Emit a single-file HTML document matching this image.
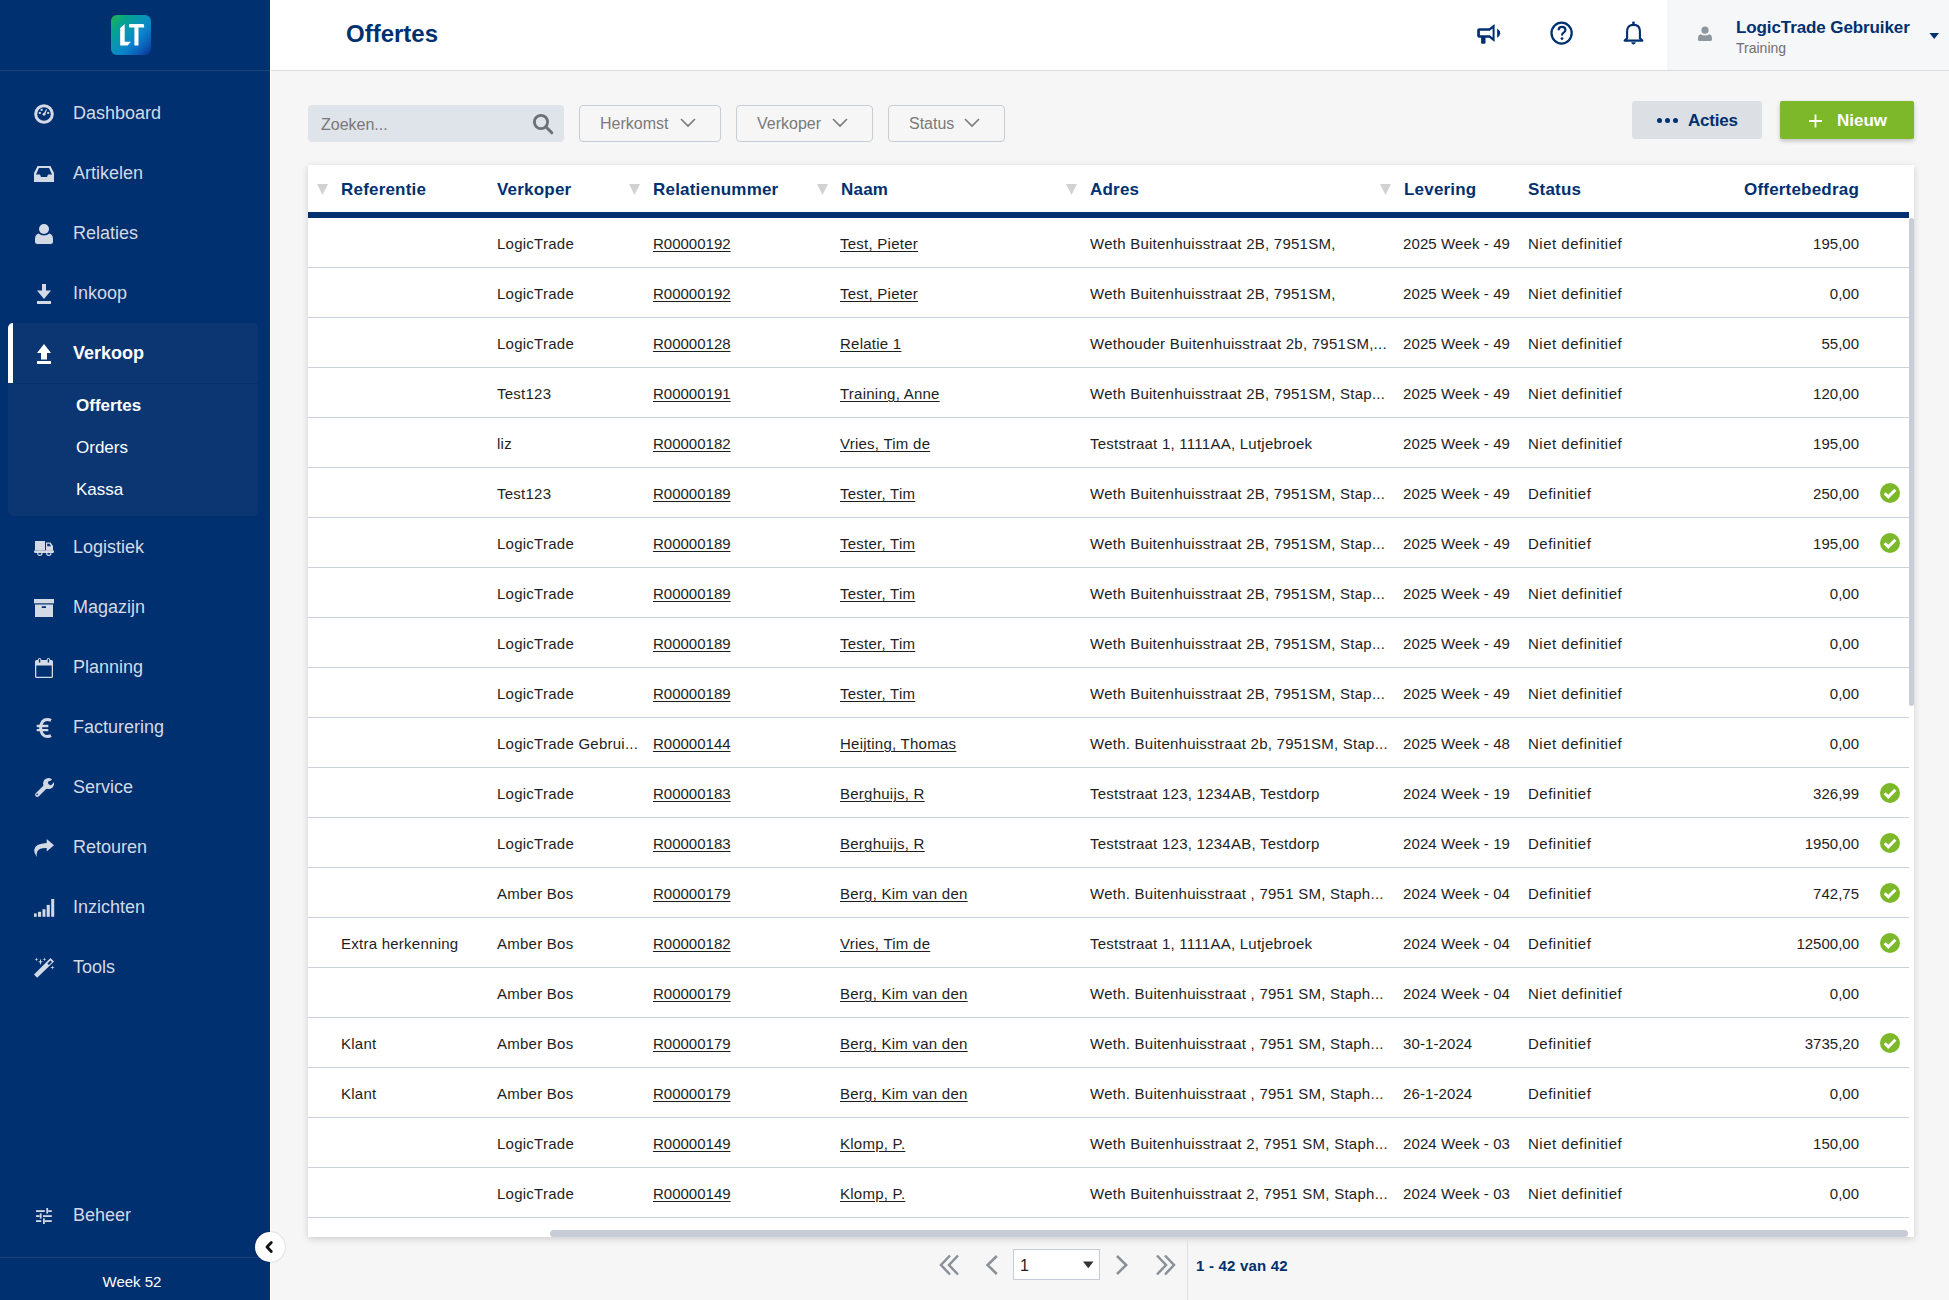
<!DOCTYPE html>
<html><head><meta charset="utf-8"><title>Offertes</title>
<style>
html,body{margin:0;padding:0;}
body{width:1949px;height:1300px;overflow:hidden;position:relative;background:#f6f6f6;font-family:"Liberation Sans",sans-serif;}
.t{position:absolute;white-space:nowrap;}
.u{text-decoration:underline;text-underline-offset:2px;text-decoration-thickness:1px;}
</style></head><body>

<div style="position:absolute;left:0px;top:0px;width:270px;height:1300px;background:#00306f;"></div>
<div style="position:absolute;left:270px;top:0px;width:1px;height:1300px;background:#ffffff;"></div>
<div style="position:absolute;left:111px;top:15px;width:40px;height:40px;border-radius:6px;background:linear-gradient(135deg,#27b14f 0%,#05a58a 22%,#0a93b8 45%,#0b83cc 62%,#0a60b8 80%,#0b2f8f 100%);"></div>
<svg style="position:absolute;left:111px;top:15px" width="40" height="40" viewBox="0 0 40 40"><path fill="#fff" d="M9.2 13.1 L13.7 9.1 L13.7 26.7 L19.9 26.7 L16.6 30.4 L9.2 30.4 Z"/><path fill="#fff" d="M18 9.1 H31.8 Q33.1 9.1 33.1 10.4 V12.6 H27.5 V30.4 H23.4 V12.6 H18.6 L18 12 Z"/></svg>
<div style="position:absolute;left:0px;top:70px;width:270px;height:1px;background:#1a4178;"></div>
<div class="t " style="left:73px;top:104.00px;font-size:18px;line-height:18px;color:#d3dae6;font-weight:400;">Dashboard</div>
<div class="t " style="left:73px;top:164.00px;font-size:18px;line-height:18px;color:#d3dae6;font-weight:400;">Artikelen</div>
<div class="t " style="left:73px;top:224.00px;font-size:18px;line-height:18px;color:#d3dae6;font-weight:400;">Relaties</div>
<div class="t " style="left:73px;top:284.00px;font-size:18px;line-height:18px;color:#d3dae6;font-weight:400;">Inkoop</div>
<div style="position:absolute;left:8px;top:323px;width:250px;height:193px;border-radius:5px;background:#0b3672;"></div>
<div style="position:absolute;left:8px;top:323px;width:5px;height:60px;border-radius:5px 0 0 0;background:#ffffff;"></div>
<div style="position:absolute;left:13px;top:383px;width:245px;height:1px;background:#083068;"></div>
<div class="t " style="left:73px;top:344.00px;font-size:18px;line-height:18px;color:#ffffff;font-weight:700;">Verkoop</div>
<div class="t " style="left:76px;top:397.00px;font-size:17px;line-height:17px;color:#ffffff;font-weight:700;">Offertes</div>
<div class="t " style="left:76px;top:439.00px;font-size:17px;line-height:17px;color:#ffffff;font-weight:400;">Orders</div>
<div class="t " style="left:76px;top:481.00px;font-size:17px;line-height:17px;color:#ffffff;font-weight:400;">Kassa</div>
<div class="t " style="left:73px;top:538.00px;font-size:18px;line-height:18px;color:#d3dae6;font-weight:400;">Logistiek</div>
<div class="t " style="left:73px;top:598.00px;font-size:18px;line-height:18px;color:#d3dae6;font-weight:400;">Magazijn</div>
<div class="t " style="left:73px;top:658.00px;font-size:18px;line-height:18px;color:#d3dae6;font-weight:400;">Planning</div>
<div class="t " style="left:73px;top:718.00px;font-size:18px;line-height:18px;color:#d3dae6;font-weight:400;">Facturering</div>
<div class="t " style="left:73px;top:778.00px;font-size:18px;line-height:18px;color:#d3dae6;font-weight:400;">Service</div>
<div class="t " style="left:73px;top:838.00px;font-size:18px;line-height:18px;color:#d3dae6;font-weight:400;">Retouren</div>
<div class="t " style="left:73px;top:898.00px;font-size:18px;line-height:18px;color:#d3dae6;font-weight:400;">Inzichten</div>
<div class="t " style="left:73px;top:958.00px;font-size:18px;line-height:18px;color:#d3dae6;font-weight:400;">Tools</div>
<div class="t " style="left:73px;top:1206.00px;font-size:18px;line-height:18px;color:#d3dae6;font-weight:400;">Beheer</div>
<div style="position:absolute;left:0px;top:1257px;width:270px;height:1px;background:#1a4178;"></div>
<div class="t " style="left:-168px;width:600px;text-align:center;top:1274.00px;font-size:15px;line-height:15px;color:#ffffff;font-weight:400;">Week 52</div>
<svg style="position:absolute;left:34px;top:104px" width="20" height="20" viewBox="0 0 20 20"><circle cx="10" cy="10" r="8.3" fill="none" stroke="#d3dae6" stroke-width="3"/><rect x="4.8" y="7.9" width="2" height="2" fill="#d3dae6"/><rect x="13.2" y="7.9" width="2" height="2" fill="#d3dae6"/><rect x="6.6" y="4.8" width="2" height="2" fill="#d3dae6"/><path d="M9 10.5 L12.3 5 L13 5.4 L11 11 Z" fill="#d3dae6"/><circle cx="10" cy="10.3" r="1.4" fill="#d3dae6"/></svg>
<svg style="position:absolute;left:34px;top:166px" width="20" height="16" viewBox="0 0 20 16"><path fill="#d3dae6" fill-rule="evenodd" d="M3.5 0 H16.5 L20 7 V16 H0 V7 Z M5 2 L2 8.5 H6 L7 11 H13 L14 8.5 H18 L15 2 Z"/></svg>
<svg style="position:absolute;left:34px;top:224px" width="20" height="20" viewBox="0 0 20 20"><circle cx="10" cy="5" r="5" fill="#d3dae6"/><path fill="#d3dae6" d="M4.5 9.5 Q7 11.5 10 11.5 Q13 11.5 15.5 9.5 Q19 10.5 19 15 V17.5 Q19 20 16.5 20 H3.5 Q1 20 1 17.5 V15 Q1 10.5 4.5 9.5 Z"/></svg>
<svg style="position:absolute;left:37px;top:284px" width="14" height="20" viewBox="0 0 14 20"><path fill="#d3dae6" d="M5 0 H9 V6.5 H14 L7 15 L0 6.5 H5 Z"/><rect x="0" y="17" width="14" height="3" fill="#d3dae6"/></svg>
<svg style="position:absolute;left:37px;top:344px" width="14" height="20" viewBox="0 0 14 20"><path fill="#fff" d="M7 0 L14 9 H10 V15.5 H4 V9 H0 Z"/><rect x="0" y="17" width="14" height="3" fill="#fff"/></svg>
<svg style="position:absolute;left:34px;top:541px" width="20" height="15" viewBox="0 0 20 15"><rect x="1" y="0" width="10" height="9" fill="#d3dae6"/><path fill="#d3dae6" fill-rule="evenodd" d="M12 1.5 H16.5 L19 5 V9.5 H12 Z M13.2 2.8 V5.2 H17 L15.6 2.8 Z"/><rect x="0" y="9.3" width="20" height="2.6" rx="1.2" fill="#d3dae6"/><circle cx="5.8" cy="12.3" r="2.1" fill="none" stroke="#d3dae6" stroke-width="1.2"/><circle cx="14.8" cy="12.3" r="2.1" fill="none" stroke="#d3dae6" stroke-width="1.2"/></svg>
<svg style="position:absolute;left:34px;top:599px" width="20" height="18" viewBox="0 0 20 18"><rect x="0" y="0" width="20" height="4.3" fill="#d3dae6"/><path fill="#d3dae6" fill-rule="evenodd" d="M1 5.5 H19 V18 H1 Z M7.8 7.3 V9 H12 V7.3 Z"/></svg>
<svg style="position:absolute;left:35px;top:658px" width="18" height="20" viewBox="0 0 18 20"><path fill="#d3dae6" fill-rule="evenodd" d="M1.5 2 H16.5 Q18 2 18 3.5 V18.5 Q18 20 16.5 20 H1.5 Q0 20 0 18.5 V3.5 Q0 2 1.5 2 Z M1.3 7.4 V18.7 H16.7 V7.4 Z"/><rect x="2.9" y="0" width="3.4" height="5.4" rx="1.7" fill="#d3dae6"/><rect x="11.7" y="0" width="3.4" height="5.4" rx="1.7" fill="#d3dae6"/><rect x="3.9" y="1" width="1.4" height="3.6" rx="0.7" fill="#00306f"/><rect x="12.7" y="1" width="1.4" height="3.6" rx="0.7" fill="#00306f"/></svg>
<svg style="position:absolute;left:36px;top:718px" width="16" height="20" viewBox="0 0 16 20"><path fill="none" stroke="#d3dae6" stroke-width="3" d="M15 2.4 Q13.2 1.5 11.2 1.5 Q5.2 1.5 4.6 10 Q5.2 18.5 11.2 18.5 Q13.2 18.5 15 17.6"/><rect x="0.7" y="6.8" width="11.6" height="2.4" fill="#d3dae6"/><rect x="0.7" y="11" width="11.6" height="2.2" fill="#d3dae6"/></svg>
<svg style="position:absolute;left:34px;top:778px" width="20" height="20" viewBox="0 0 20 20"><circle cx="14.6" cy="5.5" r="5.5" fill="#d3dae6"/><path d="M12.6 7.5 L3.3 16.7" stroke="#d3dae6" stroke-width="4.4" stroke-linecap="round"/><path fill="#00306f" d="M14.4 5 L18.8 0.6 L21.2 3 L16.8 7.4 Z"/><circle cx="16" cy="4.7" r="2" fill="#00306f"/><circle cx="3.2" cy="16.4" r="0.8" fill="#00306f"/></svg>
<svg style="position:absolute;left:34px;top:839px" width="20" height="18" viewBox="0 0 20 18"><path fill="#d3dae6" d="M12.7 0 L20 6.3 L12.7 12.6 V9 Q5.5 8.8 3.4 12.2 Q2.4 14 2.8 18 Q0 14.2 0.2 11 Q0.8 4.5 12.7 4 Z"/></svg>
<svg style="position:absolute;left:34px;top:899px" width="21" height="18" viewBox="0 0 21 18"><rect x="0" y="14.4" width="2.7" height="3.4" fill="#d3dae6"/><rect x="4" y="12.8" width="3.1" height="5" fill="#d3dae6"/><rect x="8.5" y="10.2" width="2.9" height="7.6" fill="#d3dae6"/><rect x="12.7" y="5.9" width="3.1" height="11.9" fill="#d3dae6"/><rect x="17.2" y="0" width="3" height="17.8" fill="#d3dae6"/></svg>
<svg style="position:absolute;left:34px;top:956px" width="21" height="22" viewBox="0 0 21 22"><path fill="#d3dae6" fill-rule="evenodd" d="M-0.1 18.5 L16.5 2.1 L20 5.4 L3.15 21.85 Z M13.4 7.5 L16.5 4.4 L18 5.9 L14.9 8.9 Z"/><path fill="#d3dae6" d="M2.5 1.1999999999999997 L2.95 2.9499999999999997 L4.7 3.4 L2.95 3.85 L2.5 5.6 L2.05 3.85 L0.2999999999999998 3.4 L2.05 2.9499999999999997 Z M6.5 2.4 L7.15 5.1499999999999995 L8.9 5.8 L7.15 6.45 L6.5 9.2 L5.85 6.45 L4.1 5.8 L5.85 5.1499999999999995 Z M10.4 1.1999999999999997 L10.85 2.9499999999999997 L12.600000000000001 3.4 L10.85 3.85 L10.4 5.6 L9.950000000000001 3.85 L8.2 3.4 L9.950000000000001 2.9499999999999997 Z M18.5 9.2 L18.95 11.05 L20.8 11.5 L18.95 11.95 L18.5 13.8 L18.05 11.95 L16.2 11.5 L18.05 11.05 Z"/></svg>
<svg style="position:absolute;left:36px;top:1208px" width="16" height="16" viewBox="0 0 16 16"><g fill="#d3dae6"><rect x="0" y="2.2" width="8.8" height="1.8"/><rect x="12.2" y="2.2" width="3.6" height="1.8"/><rect x="10.3" y="0" width="1.8" height="5.6"/><rect x="0" y="7.2" width="3.6" height="1.8"/><rect x="7" y="7.2" width="8.8" height="1.8"/><rect x="3.8" y="5.4" width="1.8" height="5.2"/><rect x="0" y="12.2" width="5.3" height="1.8"/><rect x="8.6" y="12.2" width="7.2" height="1.8"/><rect x="7" y="10.4" width="1.8" height="5.6"/></g></svg>
<div style="position:absolute;left:255px;top:1232px;width:30px;height:30px;border-radius:50%;background:#fff;box-shadow:0 0 2px rgba(0,0,0,0.25);"></div>
<svg style="position:absolute;left:263px;top:1240px" width="12" height="14" viewBox="0 0 12 14"><path d="M8.3 2.6 L4 7 L8.3 11.4" fill="none" stroke="#111" stroke-width="2.8" stroke-linecap="round" stroke-linejoin="round"/></svg>
<div style="position:absolute;left:271px;top:0px;width:1678px;height:70px;background:#ffffff;"></div>
<div style="position:absolute;left:1667px;top:0px;width:282px;height:70px;background:#f6f7f9;"></div>
<div style="position:absolute;left:271px;top:70px;width:1678px;height:1px;background:#dcdcdc;"></div>
<div class="t " style="left:346px;top:21.50px;font-size:24px;line-height:24px;color:#00306f;font-weight:700;">Offertes</div>
<svg style="position:absolute;left:1476px;top:23px" width="26" height="22" viewBox="0 0 26 22"><path fill="#00306f" fill-rule="evenodd" d="M3.2 5.3 H13.2 L18.6 0.9 V19 L13.2 14.7 H9.5 V19.7 Q9.5 20.7 8.5 20.7 H6.1 Q5.1 20.7 5.1 19.7 V14.7 H3.2 Q1.2 14.7 1.2 12.7 V7.3 Q1.2 5.3 3.2 5.3 Z M3.9 7.8 V12.2 H13.8 L16.6 14.4 V5.6 L13.8 7.8 Z"/><path fill="#00306f" d="M21.1 5.6 Q24.2 7.5 24.2 10.15 Q24.2 12.8 21.1 14.7 Z"/></svg>
<svg style="position:absolute;left:1549px;top:20px" width="26" height="26" viewBox="0 0 26 26"><ellipse cx="12.6" cy="13.1" rx="10.1" ry="10.5" fill="none" stroke="#00306f" stroke-width="2.3"/><path d="M9.6 10.2 Q9.6 6.8 13 6.8 Q16.4 6.8 16.4 9.9 Q16.4 11.6 14.6 12.6 Q13 13.5 13 15.4" fill="none" stroke="#00306f" stroke-width="2.2"/><circle cx="13" cy="18.6" r="1.4" fill="#00306f"/></svg>
<svg style="position:absolute;left:1622px;top:20px" width="24" height="26" viewBox="0 0 24 26"><path fill="none" stroke="#00306f" stroke-width="2.1" stroke-linejoin="round" d="M5.1 18.2 V11.3 Q5.1 4.9 11.5 4.9 Q17.9 4.9 17.9 11.3 V18.2 L20.4 20.6 H2.6 Z"/><rect x="10.3" y="1.5" width="2.4" height="3.4" rx="0.8" fill="#00306f"/><path d="M9.2 22.3 H13.8 Q13.4 24.6 11.5 24.6 Q9.6 24.6 9.2 22.3 Z" fill="#00306f"/></svg>
<svg style="position:absolute;left:1697px;top:26px" width="16" height="16" viewBox="0 0 16 16"><circle cx="8" cy="4.2" r="3.6" fill="#8f969e"/><path fill="#8f969e" d="M3.5 8.3 Q5.5 9.6 8 9.6 Q10.5 9.6 12.5 8.3 Q15 9 15 12 V13.4 Q15 15 13.4 15 H2.6 Q1 15 1 13.4 V12 Q1 9 3.5 8.3 Z"/></svg>
<div class="t " style="left:1736px;top:19.00px;font-size:17px;line-height:17px;color:#00306f;font-weight:700;letter-spacing:-0.1px;">LogicTrade Gebruiker</div>
<div class="t " style="left:1736px;top:41.00px;font-size:14px;line-height:14px;color:#6f6f6f;font-weight:400;">Training</div>
<svg style="position:absolute;left:1929px;top:32px" width="11" height="8" viewBox="0 0 11 8"><path d="M0.5 1 H10 L5.25 7 Z" fill="#00306f"/></svg>
<div style="position:absolute;left:308px;top:105px;width:256px;height:37px;border-radius:4px;background:#dfe3ea;"></div>
<div class="t " style="left:321px;top:116.50px;font-size:16px;line-height:16px;color:#787878;font-weight:400;">Zoeken...</div>
<svg style="position:absolute;left:532px;top:113px" width="22" height="22" viewBox="0 0 22 22"><circle cx="9" cy="9" r="6.6" fill="none" stroke="#6d7074" stroke-width="2.8"/><path d="M13.8 13.8 L19.8 19.8" stroke="#6d7074" stroke-width="3" stroke-linecap="round"/></svg>
<div style="position:absolute;left:579px;top:105px;width:140px;height:35px;border:1px solid #c7cdd7;border-radius:4px;"></div>
<div class="t " style="left:600px;top:116.00px;font-size:16px;line-height:16px;color:#7a7a7a;font-weight:400;">Herkomst</div>
<svg style="position:absolute;left:680px;top:117px" width="16" height="12" viewBox="0 0 16 12"><path d="M1 2 L8 9 L15 2" fill="none" stroke="#7a7a7a" stroke-width="1.6"/></svg>
<div style="position:absolute;left:736px;top:105px;width:135px;height:35px;border:1px solid #c7cdd7;border-radius:4px;"></div>
<div class="t " style="left:757px;top:116.00px;font-size:16px;line-height:16px;color:#7a7a7a;font-weight:400;">Verkoper</div>
<svg style="position:absolute;left:832px;top:117px" width="16" height="12" viewBox="0 0 16 12"><path d="M1 2 L8 9 L15 2" fill="none" stroke="#7a7a7a" stroke-width="1.6"/></svg>
<div style="position:absolute;left:888px;top:105px;width:115px;height:35px;border:1px solid #c7cdd7;border-radius:4px;"></div>
<div class="t " style="left:909px;top:116.00px;font-size:16px;line-height:16px;color:#7a7a7a;font-weight:400;">Status</div>
<svg style="position:absolute;left:964px;top:117px" width="16" height="12" viewBox="0 0 16 12"><path d="M1 2 L8 9 L15 2" fill="none" stroke="#7a7a7a" stroke-width="1.6"/></svg>
<div style="position:absolute;left:1632px;top:101px;width:130px;height:37.5px;border-radius:3px;background:#dcdfe4;"></div>
<div style="position:absolute;left:1657.0px;top:117.5px;width:5px;height:5px;border-radius:50%;background:#00306f;"></div>
<div style="position:absolute;left:1665.0px;top:117.5px;width:5px;height:5px;border-radius:50%;background:#00306f;"></div>
<div style="position:absolute;left:1673.0px;top:117.5px;width:5px;height:5px;border-radius:50%;background:#00306f;"></div>
<div class="t " style="left:1688px;top:112.00px;font-size:17px;line-height:17px;color:#00306f;font-weight:700;letter-spacing:-0.2px;">Acties</div>
<div style="position:absolute;left:1780px;top:101px;width:134px;height:37.5px;border-radius:2px;background:#7cb82a;box-shadow:0 2px 4px rgba(0,0,0,0.22);"></div>
<svg style="position:absolute;left:1808px;top:114px" width="15" height="14" viewBox="0 0 15 14"><path d="M7.5 0.5 V13.5 M1 7 H14" stroke="#fff" stroke-width="1.8"/></svg>
<div class="t " style="left:1837px;top:112.00px;font-size:17px;line-height:17px;color:#ffffff;font-weight:700;">Nieuw</div>
<div style="position:absolute;left:308px;top:165px;width:1606px;height:1072px;background:#fff;box-shadow:0 2px 7px rgba(0,0,0,0.17);"></div>
<div class="t " style="left:341px;top:181.00px;font-size:17px;line-height:17px;color:#00306f;font-weight:700;letter-spacing:0.2px;">Referentie</div>
<svg style="position:absolute;left:317px;top:184px" width="11" height="11" viewBox="0 0 11 11"><path d="M0 0 H11 L5.5 11 Z" fill="#d2d2d2"/></svg>
<div class="t " style="left:497px;top:181.00px;font-size:17px;line-height:17px;color:#00306f;font-weight:700;letter-spacing:0.2px;">Verkoper</div>
<div class="t " style="left:653px;top:181.00px;font-size:17px;line-height:17px;color:#00306f;font-weight:700;letter-spacing:0.2px;">Relatienummer</div>
<svg style="position:absolute;left:629px;top:184px" width="11" height="11" viewBox="0 0 11 11"><path d="M0 0 H11 L5.5 11 Z" fill="#d2d2d2"/></svg>
<div class="t " style="left:841px;top:181.00px;font-size:17px;line-height:17px;color:#00306f;font-weight:700;letter-spacing:0.2px;">Naam</div>
<svg style="position:absolute;left:817px;top:184px" width="11" height="11" viewBox="0 0 11 11"><path d="M0 0 H11 L5.5 11 Z" fill="#d2d2d2"/></svg>
<div class="t " style="left:1090px;top:181.00px;font-size:17px;line-height:17px;color:#00306f;font-weight:700;letter-spacing:0.2px;">Adres</div>
<svg style="position:absolute;left:1066px;top:184px" width="11" height="11" viewBox="0 0 11 11"><path d="M0 0 H11 L5.5 11 Z" fill="#d2d2d2"/></svg>
<div class="t " style="left:1404px;top:181.00px;font-size:17px;line-height:17px;color:#00306f;font-weight:700;letter-spacing:0.2px;">Levering</div>
<svg style="position:absolute;left:1380px;top:184px" width="11" height="11" viewBox="0 0 11 11"><path d="M0 0 H11 L5.5 11 Z" fill="#d2d2d2"/></svg>
<div class="t " style="left:1528px;top:181.00px;font-size:17px;line-height:17px;color:#00306f;font-weight:700;letter-spacing:0.2px;">Status</div>
<div class="t " style="right:90px;top:181.00px;font-size:17px;line-height:17px;color:#00306f;font-weight:700;letter-spacing:0.2px;">Offertebedrag</div>
<div style="position:absolute;left:308px;top:212px;width:1601px;height:6px;background:#00306f;"></div>
<div class="t " style="left:497px;top:236.00px;font-size:15px;line-height:15px;color:#1e1e1e;font-weight:400;letter-spacing:0.25px;">LogicTrade</div>
<div class="t u" style="left:653px;top:236.00px;font-size:15px;line-height:15px;color:#1e1e1e;font-weight:400;">R00000192</div>
<div class="t u" style="left:840px;top:236.00px;font-size:15px;line-height:15px;color:#1e1e1e;font-weight:400;letter-spacing:0.25px;">Test, Pieter</div>
<div class="t " style="left:1090px;top:236.00px;font-size:15px;line-height:15px;color:#1e1e1e;font-weight:400;letter-spacing:0.25px;">Weth Buitenhuisstraat 2B, 7951SM,</div>
<div class="t " style="left:1403px;top:236.00px;font-size:15px;line-height:15px;color:#1e1e1e;font-weight:400;letter-spacing:0.1px;">2025 Week - 49</div>
<div class="t " style="left:1528px;top:236.00px;font-size:15px;line-height:15px;color:#1e1e1e;font-weight:400;letter-spacing:0.5px;">Niet definitief</div>
<div class="t " style="right:90px;top:236.00px;font-size:15px;line-height:15px;color:#1e1e1e;font-weight:400;">195,00</div>
<div style="position:absolute;left:308px;top:267px;width:1601px;height:1px;background:#cbd2db;"></div>
<div class="t " style="left:497px;top:286.00px;font-size:15px;line-height:15px;color:#1e1e1e;font-weight:400;letter-spacing:0.25px;">LogicTrade</div>
<div class="t u" style="left:653px;top:286.00px;font-size:15px;line-height:15px;color:#1e1e1e;font-weight:400;">R00000192</div>
<div class="t u" style="left:840px;top:286.00px;font-size:15px;line-height:15px;color:#1e1e1e;font-weight:400;letter-spacing:0.25px;">Test, Pieter</div>
<div class="t " style="left:1090px;top:286.00px;font-size:15px;line-height:15px;color:#1e1e1e;font-weight:400;letter-spacing:0.25px;">Weth Buitenhuisstraat 2B, 7951SM,</div>
<div class="t " style="left:1403px;top:286.00px;font-size:15px;line-height:15px;color:#1e1e1e;font-weight:400;letter-spacing:0.1px;">2025 Week - 49</div>
<div class="t " style="left:1528px;top:286.00px;font-size:15px;line-height:15px;color:#1e1e1e;font-weight:400;letter-spacing:0.5px;">Niet definitief</div>
<div class="t " style="right:90px;top:286.00px;font-size:15px;line-height:15px;color:#1e1e1e;font-weight:400;">0,00</div>
<div style="position:absolute;left:308px;top:317px;width:1601px;height:1px;background:#cbd2db;"></div>
<div class="t " style="left:497px;top:336.00px;font-size:15px;line-height:15px;color:#1e1e1e;font-weight:400;letter-spacing:0.25px;">LogicTrade</div>
<div class="t u" style="left:653px;top:336.00px;font-size:15px;line-height:15px;color:#1e1e1e;font-weight:400;">R00000128</div>
<div class="t u" style="left:840px;top:336.00px;font-size:15px;line-height:15px;color:#1e1e1e;font-weight:400;letter-spacing:0.25px;">Relatie 1</div>
<div class="t " style="left:1090px;top:336.00px;font-size:15px;line-height:15px;color:#1e1e1e;font-weight:400;letter-spacing:0.25px;">Wethouder Buitenhuisstraat 2b, 7951SM,...</div>
<div class="t " style="left:1403px;top:336.00px;font-size:15px;line-height:15px;color:#1e1e1e;font-weight:400;letter-spacing:0.1px;">2025 Week - 49</div>
<div class="t " style="left:1528px;top:336.00px;font-size:15px;line-height:15px;color:#1e1e1e;font-weight:400;letter-spacing:0.5px;">Niet definitief</div>
<div class="t " style="right:90px;top:336.00px;font-size:15px;line-height:15px;color:#1e1e1e;font-weight:400;">55,00</div>
<div style="position:absolute;left:308px;top:367px;width:1601px;height:1px;background:#cbd2db;"></div>
<div class="t " style="left:497px;top:386.00px;font-size:15px;line-height:15px;color:#1e1e1e;font-weight:400;letter-spacing:0.25px;">Test123</div>
<div class="t u" style="left:653px;top:386.00px;font-size:15px;line-height:15px;color:#1e1e1e;font-weight:400;">R00000191</div>
<div class="t u" style="left:840px;top:386.00px;font-size:15px;line-height:15px;color:#1e1e1e;font-weight:400;letter-spacing:0.25px;">Training, Anne</div>
<div class="t " style="left:1090px;top:386.00px;font-size:15px;line-height:15px;color:#1e1e1e;font-weight:400;letter-spacing:0.25px;">Weth Buitenhuisstraat 2B, 7951SM, Stap...</div>
<div class="t " style="left:1403px;top:386.00px;font-size:15px;line-height:15px;color:#1e1e1e;font-weight:400;letter-spacing:0.1px;">2025 Week - 49</div>
<div class="t " style="left:1528px;top:386.00px;font-size:15px;line-height:15px;color:#1e1e1e;font-weight:400;letter-spacing:0.5px;">Niet definitief</div>
<div class="t " style="right:90px;top:386.00px;font-size:15px;line-height:15px;color:#1e1e1e;font-weight:400;">120,00</div>
<div style="position:absolute;left:308px;top:417px;width:1601px;height:1px;background:#cbd2db;"></div>
<div class="t " style="left:497px;top:436.00px;font-size:15px;line-height:15px;color:#1e1e1e;font-weight:400;letter-spacing:0.25px;">liz</div>
<div class="t u" style="left:653px;top:436.00px;font-size:15px;line-height:15px;color:#1e1e1e;font-weight:400;">R00000182</div>
<div class="t u" style="left:840px;top:436.00px;font-size:15px;line-height:15px;color:#1e1e1e;font-weight:400;letter-spacing:0.25px;">Vries, Tim de</div>
<div class="t " style="left:1090px;top:436.00px;font-size:15px;line-height:15px;color:#1e1e1e;font-weight:400;letter-spacing:0.25px;">Teststraat 1, 1111AA, Lutjebroek</div>
<div class="t " style="left:1403px;top:436.00px;font-size:15px;line-height:15px;color:#1e1e1e;font-weight:400;letter-spacing:0.1px;">2025 Week - 49</div>
<div class="t " style="left:1528px;top:436.00px;font-size:15px;line-height:15px;color:#1e1e1e;font-weight:400;letter-spacing:0.5px;">Niet definitief</div>
<div class="t " style="right:90px;top:436.00px;font-size:15px;line-height:15px;color:#1e1e1e;font-weight:400;">195,00</div>
<div style="position:absolute;left:308px;top:467px;width:1601px;height:1px;background:#cbd2db;"></div>
<div class="t " style="left:497px;top:486.00px;font-size:15px;line-height:15px;color:#1e1e1e;font-weight:400;letter-spacing:0.25px;">Test123</div>
<div class="t u" style="left:653px;top:486.00px;font-size:15px;line-height:15px;color:#1e1e1e;font-weight:400;">R00000189</div>
<div class="t u" style="left:840px;top:486.00px;font-size:15px;line-height:15px;color:#1e1e1e;font-weight:400;letter-spacing:0.25px;">Tester, Tim</div>
<div class="t " style="left:1090px;top:486.00px;font-size:15px;line-height:15px;color:#1e1e1e;font-weight:400;letter-spacing:0.25px;">Weth Buitenhuisstraat 2B, 7951SM, Stap...</div>
<div class="t " style="left:1403px;top:486.00px;font-size:15px;line-height:15px;color:#1e1e1e;font-weight:400;letter-spacing:0.1px;">2025 Week - 49</div>
<div class="t " style="left:1528px;top:486.00px;font-size:15px;line-height:15px;color:#1e1e1e;font-weight:400;letter-spacing:0.5px;">Definitief</div>
<div class="t " style="right:90px;top:486.00px;font-size:15px;line-height:15px;color:#1e1e1e;font-weight:400;">250,00</div>
<svg style="position:absolute;left:1880px;top:483px" width="20" height="20" viewBox="0 0 20 20"><circle cx="10" cy="10" r="10" fill="#7cb82a"/><path d="M4.6 10.2 L8.3 13.9 L15.4 6.8" fill="none" stroke="#fff" stroke-width="3"/></svg>
<div style="position:absolute;left:308px;top:517px;width:1601px;height:1px;background:#cbd2db;"></div>
<div class="t " style="left:497px;top:536.00px;font-size:15px;line-height:15px;color:#1e1e1e;font-weight:400;letter-spacing:0.25px;">LogicTrade</div>
<div class="t u" style="left:653px;top:536.00px;font-size:15px;line-height:15px;color:#1e1e1e;font-weight:400;">R00000189</div>
<div class="t u" style="left:840px;top:536.00px;font-size:15px;line-height:15px;color:#1e1e1e;font-weight:400;letter-spacing:0.25px;">Tester, Tim</div>
<div class="t " style="left:1090px;top:536.00px;font-size:15px;line-height:15px;color:#1e1e1e;font-weight:400;letter-spacing:0.25px;">Weth Buitenhuisstraat 2B, 7951SM, Stap...</div>
<div class="t " style="left:1403px;top:536.00px;font-size:15px;line-height:15px;color:#1e1e1e;font-weight:400;letter-spacing:0.1px;">2025 Week - 49</div>
<div class="t " style="left:1528px;top:536.00px;font-size:15px;line-height:15px;color:#1e1e1e;font-weight:400;letter-spacing:0.5px;">Definitief</div>
<div class="t " style="right:90px;top:536.00px;font-size:15px;line-height:15px;color:#1e1e1e;font-weight:400;">195,00</div>
<svg style="position:absolute;left:1880px;top:533px" width="20" height="20" viewBox="0 0 20 20"><circle cx="10" cy="10" r="10" fill="#7cb82a"/><path d="M4.6 10.2 L8.3 13.9 L15.4 6.8" fill="none" stroke="#fff" stroke-width="3"/></svg>
<div style="position:absolute;left:308px;top:567px;width:1601px;height:1px;background:#cbd2db;"></div>
<div class="t " style="left:497px;top:586.00px;font-size:15px;line-height:15px;color:#1e1e1e;font-weight:400;letter-spacing:0.25px;">LogicTrade</div>
<div class="t u" style="left:653px;top:586.00px;font-size:15px;line-height:15px;color:#1e1e1e;font-weight:400;">R00000189</div>
<div class="t u" style="left:840px;top:586.00px;font-size:15px;line-height:15px;color:#1e1e1e;font-weight:400;letter-spacing:0.25px;">Tester, Tim</div>
<div class="t " style="left:1090px;top:586.00px;font-size:15px;line-height:15px;color:#1e1e1e;font-weight:400;letter-spacing:0.25px;">Weth Buitenhuisstraat 2B, 7951SM, Stap...</div>
<div class="t " style="left:1403px;top:586.00px;font-size:15px;line-height:15px;color:#1e1e1e;font-weight:400;letter-spacing:0.1px;">2025 Week - 49</div>
<div class="t " style="left:1528px;top:586.00px;font-size:15px;line-height:15px;color:#1e1e1e;font-weight:400;letter-spacing:0.5px;">Niet definitief</div>
<div class="t " style="right:90px;top:586.00px;font-size:15px;line-height:15px;color:#1e1e1e;font-weight:400;">0,00</div>
<div style="position:absolute;left:308px;top:617px;width:1601px;height:1px;background:#cbd2db;"></div>
<div class="t " style="left:497px;top:636.00px;font-size:15px;line-height:15px;color:#1e1e1e;font-weight:400;letter-spacing:0.25px;">LogicTrade</div>
<div class="t u" style="left:653px;top:636.00px;font-size:15px;line-height:15px;color:#1e1e1e;font-weight:400;">R00000189</div>
<div class="t u" style="left:840px;top:636.00px;font-size:15px;line-height:15px;color:#1e1e1e;font-weight:400;letter-spacing:0.25px;">Tester, Tim</div>
<div class="t " style="left:1090px;top:636.00px;font-size:15px;line-height:15px;color:#1e1e1e;font-weight:400;letter-spacing:0.25px;">Weth Buitenhuisstraat 2B, 7951SM, Stap...</div>
<div class="t " style="left:1403px;top:636.00px;font-size:15px;line-height:15px;color:#1e1e1e;font-weight:400;letter-spacing:0.1px;">2025 Week - 49</div>
<div class="t " style="left:1528px;top:636.00px;font-size:15px;line-height:15px;color:#1e1e1e;font-weight:400;letter-spacing:0.5px;">Niet definitief</div>
<div class="t " style="right:90px;top:636.00px;font-size:15px;line-height:15px;color:#1e1e1e;font-weight:400;">0,00</div>
<div style="position:absolute;left:308px;top:667px;width:1601px;height:1px;background:#cbd2db;"></div>
<div class="t " style="left:497px;top:686.00px;font-size:15px;line-height:15px;color:#1e1e1e;font-weight:400;letter-spacing:0.25px;">LogicTrade</div>
<div class="t u" style="left:653px;top:686.00px;font-size:15px;line-height:15px;color:#1e1e1e;font-weight:400;">R00000189</div>
<div class="t u" style="left:840px;top:686.00px;font-size:15px;line-height:15px;color:#1e1e1e;font-weight:400;letter-spacing:0.25px;">Tester, Tim</div>
<div class="t " style="left:1090px;top:686.00px;font-size:15px;line-height:15px;color:#1e1e1e;font-weight:400;letter-spacing:0.25px;">Weth Buitenhuisstraat 2B, 7951SM, Stap...</div>
<div class="t " style="left:1403px;top:686.00px;font-size:15px;line-height:15px;color:#1e1e1e;font-weight:400;letter-spacing:0.1px;">2025 Week - 49</div>
<div class="t " style="left:1528px;top:686.00px;font-size:15px;line-height:15px;color:#1e1e1e;font-weight:400;letter-spacing:0.5px;">Niet definitief</div>
<div class="t " style="right:90px;top:686.00px;font-size:15px;line-height:15px;color:#1e1e1e;font-weight:400;">0,00</div>
<div style="position:absolute;left:308px;top:717px;width:1601px;height:1px;background:#cbd2db;"></div>
<div class="t " style="left:497px;top:736.00px;font-size:15px;line-height:15px;color:#1e1e1e;font-weight:400;letter-spacing:0.25px;">LogicTrade Gebrui...</div>
<div class="t u" style="left:653px;top:736.00px;font-size:15px;line-height:15px;color:#1e1e1e;font-weight:400;">R00000144</div>
<div class="t u" style="left:840px;top:736.00px;font-size:15px;line-height:15px;color:#1e1e1e;font-weight:400;letter-spacing:0.25px;">Heijting, Thomas</div>
<div class="t " style="left:1090px;top:736.00px;font-size:15px;line-height:15px;color:#1e1e1e;font-weight:400;letter-spacing:0.25px;">Weth. Buitenhuisstraat 2b, 7951SM, Stap...</div>
<div class="t " style="left:1403px;top:736.00px;font-size:15px;line-height:15px;color:#1e1e1e;font-weight:400;letter-spacing:0.1px;">2025 Week - 48</div>
<div class="t " style="left:1528px;top:736.00px;font-size:15px;line-height:15px;color:#1e1e1e;font-weight:400;letter-spacing:0.5px;">Niet definitief</div>
<div class="t " style="right:90px;top:736.00px;font-size:15px;line-height:15px;color:#1e1e1e;font-weight:400;">0,00</div>
<div style="position:absolute;left:308px;top:767px;width:1601px;height:1px;background:#cbd2db;"></div>
<div class="t " style="left:497px;top:786.00px;font-size:15px;line-height:15px;color:#1e1e1e;font-weight:400;letter-spacing:0.25px;">LogicTrade</div>
<div class="t u" style="left:653px;top:786.00px;font-size:15px;line-height:15px;color:#1e1e1e;font-weight:400;">R00000183</div>
<div class="t u" style="left:840px;top:786.00px;font-size:15px;line-height:15px;color:#1e1e1e;font-weight:400;letter-spacing:0.25px;">Berghuijs, R</div>
<div class="t " style="left:1090px;top:786.00px;font-size:15px;line-height:15px;color:#1e1e1e;font-weight:400;letter-spacing:0.25px;">Teststraat 123, 1234AB, Testdorp</div>
<div class="t " style="left:1403px;top:786.00px;font-size:15px;line-height:15px;color:#1e1e1e;font-weight:400;letter-spacing:0.1px;">2024 Week - 19</div>
<div class="t " style="left:1528px;top:786.00px;font-size:15px;line-height:15px;color:#1e1e1e;font-weight:400;letter-spacing:0.5px;">Definitief</div>
<div class="t " style="right:90px;top:786.00px;font-size:15px;line-height:15px;color:#1e1e1e;font-weight:400;">326,99</div>
<svg style="position:absolute;left:1880px;top:783px" width="20" height="20" viewBox="0 0 20 20"><circle cx="10" cy="10" r="10" fill="#7cb82a"/><path d="M4.6 10.2 L8.3 13.9 L15.4 6.8" fill="none" stroke="#fff" stroke-width="3"/></svg>
<div style="position:absolute;left:308px;top:817px;width:1601px;height:1px;background:#cbd2db;"></div>
<div class="t " style="left:497px;top:836.00px;font-size:15px;line-height:15px;color:#1e1e1e;font-weight:400;letter-spacing:0.25px;">LogicTrade</div>
<div class="t u" style="left:653px;top:836.00px;font-size:15px;line-height:15px;color:#1e1e1e;font-weight:400;">R00000183</div>
<div class="t u" style="left:840px;top:836.00px;font-size:15px;line-height:15px;color:#1e1e1e;font-weight:400;letter-spacing:0.25px;">Berghuijs, R</div>
<div class="t " style="left:1090px;top:836.00px;font-size:15px;line-height:15px;color:#1e1e1e;font-weight:400;letter-spacing:0.25px;">Teststraat 123, 1234AB, Testdorp</div>
<div class="t " style="left:1403px;top:836.00px;font-size:15px;line-height:15px;color:#1e1e1e;font-weight:400;letter-spacing:0.1px;">2024 Week - 19</div>
<div class="t " style="left:1528px;top:836.00px;font-size:15px;line-height:15px;color:#1e1e1e;font-weight:400;letter-spacing:0.5px;">Definitief</div>
<div class="t " style="right:90px;top:836.00px;font-size:15px;line-height:15px;color:#1e1e1e;font-weight:400;">1950,00</div>
<svg style="position:absolute;left:1880px;top:833px" width="20" height="20" viewBox="0 0 20 20"><circle cx="10" cy="10" r="10" fill="#7cb82a"/><path d="M4.6 10.2 L8.3 13.9 L15.4 6.8" fill="none" stroke="#fff" stroke-width="3"/></svg>
<div style="position:absolute;left:308px;top:867px;width:1601px;height:1px;background:#cbd2db;"></div>
<div class="t " style="left:497px;top:886.00px;font-size:15px;line-height:15px;color:#1e1e1e;font-weight:400;letter-spacing:0.25px;">Amber Bos</div>
<div class="t u" style="left:653px;top:886.00px;font-size:15px;line-height:15px;color:#1e1e1e;font-weight:400;">R00000179</div>
<div class="t u" style="left:840px;top:886.00px;font-size:15px;line-height:15px;color:#1e1e1e;font-weight:400;letter-spacing:0.25px;">Berg, Kim van den</div>
<div class="t " style="left:1090px;top:886.00px;font-size:15px;line-height:15px;color:#1e1e1e;font-weight:400;letter-spacing:0.25px;">Weth. Buitenhuisstraat , 7951 SM, Staph...</div>
<div class="t " style="left:1403px;top:886.00px;font-size:15px;line-height:15px;color:#1e1e1e;font-weight:400;letter-spacing:0.1px;">2024 Week - 04</div>
<div class="t " style="left:1528px;top:886.00px;font-size:15px;line-height:15px;color:#1e1e1e;font-weight:400;letter-spacing:0.5px;">Definitief</div>
<div class="t " style="right:90px;top:886.00px;font-size:15px;line-height:15px;color:#1e1e1e;font-weight:400;">742,75</div>
<svg style="position:absolute;left:1880px;top:883px" width="20" height="20" viewBox="0 0 20 20"><circle cx="10" cy="10" r="10" fill="#7cb82a"/><path d="M4.6 10.2 L8.3 13.9 L15.4 6.8" fill="none" stroke="#fff" stroke-width="3"/></svg>
<div style="position:absolute;left:308px;top:917px;width:1601px;height:1px;background:#cbd2db;"></div>
<div class="t " style="left:341px;top:936.00px;font-size:15px;line-height:15px;color:#1e1e1e;font-weight:400;letter-spacing:0.25px;">Extra herkenning</div>
<div class="t " style="left:497px;top:936.00px;font-size:15px;line-height:15px;color:#1e1e1e;font-weight:400;letter-spacing:0.25px;">Amber Bos</div>
<div class="t u" style="left:653px;top:936.00px;font-size:15px;line-height:15px;color:#1e1e1e;font-weight:400;">R00000182</div>
<div class="t u" style="left:840px;top:936.00px;font-size:15px;line-height:15px;color:#1e1e1e;font-weight:400;letter-spacing:0.25px;">Vries, Tim de</div>
<div class="t " style="left:1090px;top:936.00px;font-size:15px;line-height:15px;color:#1e1e1e;font-weight:400;letter-spacing:0.25px;">Teststraat 1, 1111AA, Lutjebroek</div>
<div class="t " style="left:1403px;top:936.00px;font-size:15px;line-height:15px;color:#1e1e1e;font-weight:400;letter-spacing:0.1px;">2024 Week - 04</div>
<div class="t " style="left:1528px;top:936.00px;font-size:15px;line-height:15px;color:#1e1e1e;font-weight:400;letter-spacing:0.5px;">Definitief</div>
<div class="t " style="right:90px;top:936.00px;font-size:15px;line-height:15px;color:#1e1e1e;font-weight:400;">12500,00</div>
<svg style="position:absolute;left:1880px;top:933px" width="20" height="20" viewBox="0 0 20 20"><circle cx="10" cy="10" r="10" fill="#7cb82a"/><path d="M4.6 10.2 L8.3 13.9 L15.4 6.8" fill="none" stroke="#fff" stroke-width="3"/></svg>
<div style="position:absolute;left:308px;top:967px;width:1601px;height:1px;background:#cbd2db;"></div>
<div class="t " style="left:497px;top:986.00px;font-size:15px;line-height:15px;color:#1e1e1e;font-weight:400;letter-spacing:0.25px;">Amber Bos</div>
<div class="t u" style="left:653px;top:986.00px;font-size:15px;line-height:15px;color:#1e1e1e;font-weight:400;">R00000179</div>
<div class="t u" style="left:840px;top:986.00px;font-size:15px;line-height:15px;color:#1e1e1e;font-weight:400;letter-spacing:0.25px;">Berg, Kim van den</div>
<div class="t " style="left:1090px;top:986.00px;font-size:15px;line-height:15px;color:#1e1e1e;font-weight:400;letter-spacing:0.25px;">Weth. Buitenhuisstraat , 7951 SM, Staph...</div>
<div class="t " style="left:1403px;top:986.00px;font-size:15px;line-height:15px;color:#1e1e1e;font-weight:400;letter-spacing:0.1px;">2024 Week - 04</div>
<div class="t " style="left:1528px;top:986.00px;font-size:15px;line-height:15px;color:#1e1e1e;font-weight:400;letter-spacing:0.5px;">Niet definitief</div>
<div class="t " style="right:90px;top:986.00px;font-size:15px;line-height:15px;color:#1e1e1e;font-weight:400;">0,00</div>
<div style="position:absolute;left:308px;top:1017px;width:1601px;height:1px;background:#cbd2db;"></div>
<div class="t " style="left:341px;top:1036.00px;font-size:15px;line-height:15px;color:#1e1e1e;font-weight:400;letter-spacing:0.25px;">Klant</div>
<div class="t " style="left:497px;top:1036.00px;font-size:15px;line-height:15px;color:#1e1e1e;font-weight:400;letter-spacing:0.25px;">Amber Bos</div>
<div class="t u" style="left:653px;top:1036.00px;font-size:15px;line-height:15px;color:#1e1e1e;font-weight:400;">R00000179</div>
<div class="t u" style="left:840px;top:1036.00px;font-size:15px;line-height:15px;color:#1e1e1e;font-weight:400;letter-spacing:0.25px;">Berg, Kim van den</div>
<div class="t " style="left:1090px;top:1036.00px;font-size:15px;line-height:15px;color:#1e1e1e;font-weight:400;letter-spacing:0.25px;">Weth. Buitenhuisstraat , 7951 SM, Staph...</div>
<div class="t " style="left:1403px;top:1036.00px;font-size:15px;line-height:15px;color:#1e1e1e;font-weight:400;letter-spacing:0.1px;">30-1-2024</div>
<div class="t " style="left:1528px;top:1036.00px;font-size:15px;line-height:15px;color:#1e1e1e;font-weight:400;letter-spacing:0.5px;">Definitief</div>
<div class="t " style="right:90px;top:1036.00px;font-size:15px;line-height:15px;color:#1e1e1e;font-weight:400;">3735,20</div>
<svg style="position:absolute;left:1880px;top:1033px" width="20" height="20" viewBox="0 0 20 20"><circle cx="10" cy="10" r="10" fill="#7cb82a"/><path d="M4.6 10.2 L8.3 13.9 L15.4 6.8" fill="none" stroke="#fff" stroke-width="3"/></svg>
<div style="position:absolute;left:308px;top:1067px;width:1601px;height:1px;background:#cbd2db;"></div>
<div class="t " style="left:341px;top:1086.00px;font-size:15px;line-height:15px;color:#1e1e1e;font-weight:400;letter-spacing:0.25px;">Klant</div>
<div class="t " style="left:497px;top:1086.00px;font-size:15px;line-height:15px;color:#1e1e1e;font-weight:400;letter-spacing:0.25px;">Amber Bos</div>
<div class="t u" style="left:653px;top:1086.00px;font-size:15px;line-height:15px;color:#1e1e1e;font-weight:400;">R00000179</div>
<div class="t u" style="left:840px;top:1086.00px;font-size:15px;line-height:15px;color:#1e1e1e;font-weight:400;letter-spacing:0.25px;">Berg, Kim van den</div>
<div class="t " style="left:1090px;top:1086.00px;font-size:15px;line-height:15px;color:#1e1e1e;font-weight:400;letter-spacing:0.25px;">Weth. Buitenhuisstraat , 7951 SM, Staph...</div>
<div class="t " style="left:1403px;top:1086.00px;font-size:15px;line-height:15px;color:#1e1e1e;font-weight:400;letter-spacing:0.1px;">26-1-2024</div>
<div class="t " style="left:1528px;top:1086.00px;font-size:15px;line-height:15px;color:#1e1e1e;font-weight:400;letter-spacing:0.5px;">Definitief</div>
<div class="t " style="right:90px;top:1086.00px;font-size:15px;line-height:15px;color:#1e1e1e;font-weight:400;">0,00</div>
<div style="position:absolute;left:308px;top:1117px;width:1601px;height:1px;background:#cbd2db;"></div>
<div class="t " style="left:497px;top:1136.00px;font-size:15px;line-height:15px;color:#1e1e1e;font-weight:400;letter-spacing:0.25px;">LogicTrade</div>
<div class="t u" style="left:653px;top:1136.00px;font-size:15px;line-height:15px;color:#1e1e1e;font-weight:400;">R00000149</div>
<div class="t u" style="left:840px;top:1136.00px;font-size:15px;line-height:15px;color:#1e1e1e;font-weight:400;letter-spacing:0.25px;">Klomp, P.</div>
<div class="t " style="left:1090px;top:1136.00px;font-size:15px;line-height:15px;color:#1e1e1e;font-weight:400;letter-spacing:0.25px;">Weth Buitenhuisstraat 2, 7951 SM, Staph...</div>
<div class="t " style="left:1403px;top:1136.00px;font-size:15px;line-height:15px;color:#1e1e1e;font-weight:400;letter-spacing:0.1px;">2024 Week - 03</div>
<div class="t " style="left:1528px;top:1136.00px;font-size:15px;line-height:15px;color:#1e1e1e;font-weight:400;letter-spacing:0.5px;">Niet definitief</div>
<div class="t " style="right:90px;top:1136.00px;font-size:15px;line-height:15px;color:#1e1e1e;font-weight:400;">150,00</div>
<div style="position:absolute;left:308px;top:1167px;width:1601px;height:1px;background:#cbd2db;"></div>
<div class="t " style="left:497px;top:1186.00px;font-size:15px;line-height:15px;color:#1e1e1e;font-weight:400;letter-spacing:0.25px;">LogicTrade</div>
<div class="t u" style="left:653px;top:1186.00px;font-size:15px;line-height:15px;color:#1e1e1e;font-weight:400;">R00000149</div>
<div class="t u" style="left:840px;top:1186.00px;font-size:15px;line-height:15px;color:#1e1e1e;font-weight:400;letter-spacing:0.25px;">Klomp, P.</div>
<div class="t " style="left:1090px;top:1186.00px;font-size:15px;line-height:15px;color:#1e1e1e;font-weight:400;letter-spacing:0.25px;">Weth Buitenhuisstraat 2, 7951 SM, Staph...</div>
<div class="t " style="left:1403px;top:1186.00px;font-size:15px;line-height:15px;color:#1e1e1e;font-weight:400;letter-spacing:0.1px;">2024 Week - 03</div>
<div class="t " style="left:1528px;top:1186.00px;font-size:15px;line-height:15px;color:#1e1e1e;font-weight:400;letter-spacing:0.5px;">Niet definitief</div>
<div class="t " style="right:90px;top:1186.00px;font-size:15px;line-height:15px;color:#1e1e1e;font-weight:400;">0,00</div>
<div style="position:absolute;left:308px;top:1217px;width:1601px;height:1px;background:#cbd2db;"></div>
<div style="position:absolute;left:1909px;top:218px;width:5px;height:488px;border-radius:2.5px;background:#c6cdd6;"></div>
<div style="position:absolute;left:550px;top:1230px;width:1358px;height:7px;border-radius:3.5px;background:#c6cdd6;"></div>
<svg style="position:absolute;left:939px;top:1254px" width="23" height="22" viewBox="0 0 23 22"><path d="M11 1.5 L2 11 L11 20.5 M19 1.5 L10 11 L19 20.5" fill="none" stroke="#8a9099" stroke-width="2.5"/></svg>
<svg style="position:absolute;left:985px;top:1254px" width="14" height="22" viewBox="0 0 14 22"><path d="M11.8 2 L2.6 11 L11.8 20" fill="none" stroke="#8a9099" stroke-width="2.5"/></svg>
<div style="position:absolute;left:1013px;top:1249px;width:85px;height:29px;border:1px solid #c5cdd8;background:#fff;"></div>
<div class="t " style="left:1020px;top:1258.00px;font-size:16px;line-height:16px;color:#222;font-weight:400;">1</div>
<svg style="position:absolute;left:1083px;top:1261px" width="11" height="8" viewBox="0 0 11 8"><path d="M0 0.5 H10.5 L5.25 7.2 Z" fill="#333"/></svg>
<svg style="position:absolute;left:1115px;top:1254px" width="14" height="22" viewBox="0 0 14 22"><path d="M2 2 L11.2 11 L2 20" fill="none" stroke="#8a9099" stroke-width="2.5"/></svg>
<svg style="position:absolute;left:1153px;top:1254px" width="23" height="22" viewBox="0 0 23 22"><path d="M4 1.5 L13 11 L4 20.5 M12 1.5 L21 11 L12 20.5" fill="none" stroke="#8a9099" stroke-width="2.5"/></svg>
<div style="position:absolute;left:1187px;top:1240px;width:1px;height:60px;background:#dde1e7;"></div>
<div class="t " style="left:1196px;top:1258.00px;font-size:15px;line-height:15px;color:#00306f;font-weight:700;letter-spacing:0.2px;">1 - 42 van 42</div>
</body></html>
